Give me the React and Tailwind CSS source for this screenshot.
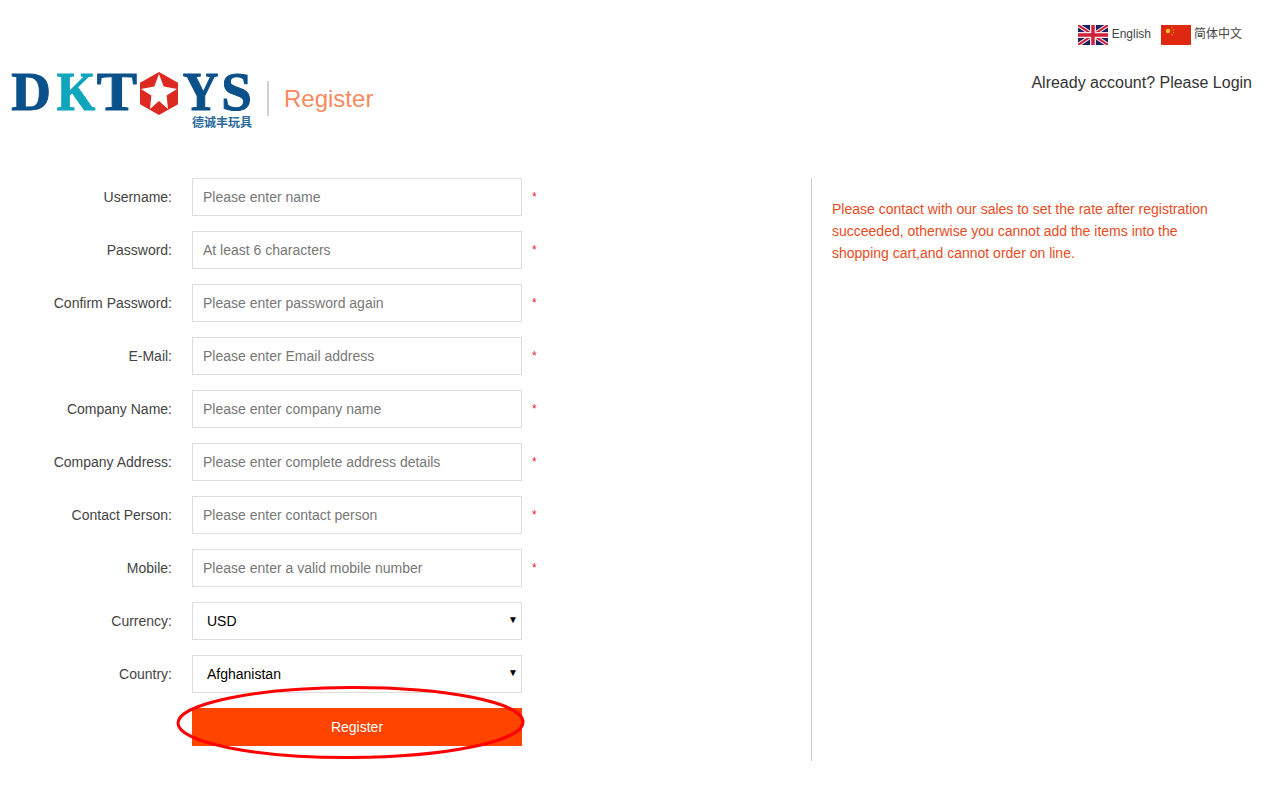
import React from 'react';

const fields = [
  { label: 'Username:', placeholder: 'Please enter name' },
  { label: 'Password:', placeholder: 'At least 6 characters' },
  { label: 'Confirm Password:', placeholder: 'Please enter password again' },
  { label: 'E-Mail:', placeholder: 'Please enter Email address' },
  { label: 'Company Name:', placeholder: 'Please enter company name' },
  { label: 'Company Address:', placeholder: 'Please enter complete address details' },
  { label: 'Contact Person:', placeholder: 'Please enter contact person' },
  { label: 'Mobile:', placeholder: 'Please enter a valid mobile number' },
];

const UkFlag = () => (
  <svg className="shrink-0" width="30" height="20" viewBox="0 0 30 20">
    <rect width="30" height="20" fill="#1a2060" />
    <path d="M0 0L30 20M30 0L0 20" stroke="#f3e6ea" strokeWidth="4" />
    <path d="M0 0L30 20M30 0L0 20" stroke="#d0213a" strokeWidth="2" />
    <path d="M15 0V20M0 10H30" stroke="#f3e6ea" strokeWidth="6" />
    <path d="M15 0V20M0 10H30" stroke="#d0213a" strokeWidth="3.4" />
  </svg>
);

const CnFlag = () => (
  <svg className="shrink-0" width="30" height="20" viewBox="0 0 30 20">
    <rect width="30" height="20" fill="#de2910" />
    <circle cx="7" cy="6" r="2.2" fill="#f7c61a" />
    <circle cx="11" cy="2.5" r="0.7" fill="#f0a020" />
    <circle cx="12.5" cy="5" r="0.7" fill="#f0a020" />
    <circle cx="12.5" cy="7.5" r="0.7" fill="#f0a020" />
    <circle cx="11" cy="10" r="0.7" fill="#f0a020" />
  </svg>
);

const HexStar = () => (
  <svg className="shrink-0" width="38" height="43" viewBox="0 0 38 43">
    <path d="M19 0L38 10.75V32.25L19 43L0 32.25V10.75Z" fill="#dc2a20" />
    <path d="M19 2L23.7 14.5L37 17L26.6 23.5L28 37L19 29L10 37L11.4 23.5L1 17L14.3 14.5Z" fill="#fff" />
  </svg>
);

const Logo = () => (
  <div className="w-[240px]">
    <div className="flex h-[46px] items-center font-['Liberation_Serif',serif] text-[55px] font-bold leading-[40px] text-[#0a5089] [-webkit-text-stroke:1px]">
      <span className="mb-[3px] flex w-[38px] shrink-0 justify-center">D</span>
      <span className="mb-[3px] ml-[7px] flex w-[38px] shrink-0 scale-x-90 justify-center text-[#0fa5bd]">K</span>
      <span className="mb-[3px] ml-[3px] flex w-[38px] shrink-0 scale-x-110 justify-center">T</span>
      <span className="ml-[4px] flex shrink-0"><HexStar /></span>
      <span className="mb-[3px] ml-[5px] flex w-[35px] shrink-0 scale-x-90 justify-center">Y</span>
      <span className="mb-[3px] ml-[5px] flex w-[27px] shrink-0 justify-center">S</span>
    </div>
    <div className="text-right font-['Noto_Sans_CJK_SC',sans-serif] text-[12px] font-bold leading-[12px] text-[#2a6a9a]">
      德诚丰玩具
    </div>
  </div>
);

const SelectRow = ({ label, value }) => (
  <div className="flex items-center">
    <label className="w-[172px] text-right text-[14px] text-[#444]">{label}</label>
    <div className="relative ml-[20px] h-[38px] w-[330px]">
      <select
        defaultValue={value}
        className="h-full w-full appearance-none border border-[#ddd] bg-white pl-[14px] text-[14px] text-black outline-none"
      >
        <option>{value}</option>
      </select>
      <span className="absolute right-[4px] top-[11px] text-[10px] leading-[14px] text-black">▼</span>
    </div>
  </div>
);

export default function App() {
  return (
    <div className="relative h-[800px] w-[1280px] overflow-hidden bg-white font-['Liberation_Sans',Arial,sans-serif]">
      {/* language switch */}
      <div className="flex h-[45px] items-start justify-end pr-[38px] pt-[25px] text-[12px] leading-[18px] text-[#444]">
        <UkFlag />
        <span className="ml-[4px]">English</span>
        <span className="ml-[10px] flex"><CnFlag /></span>
        <span className="ml-[3px] font-['Liberation_Sans','Noto_Sans_CJK_SC',sans-serif]">简体中文</span>
      </div>

      {/* header */}
      <div className="mt-[25px] flex items-start justify-between pl-[12px] pr-[28px]">
        <div className="flex items-start">
          <Logo />
          <div className="ml-[15px] mt-[11px] h-[35px] w-[2px] bg-[#d0d0d0]" />
          <div className="ml-[15px] mt-[14px] text-[24px] leading-[30px] text-[#f98a5e]">Register</div>
        </div>
        <div className="mt-[3px] text-[16px] leading-[20px] text-[#333]">Already account? Please Login</div>
      </div>

      {/* body */}
      <div className="mt-[50px] flex items-stretch">
        <div className="flex w-[811px] flex-col gap-[15px]">
          {fields.map(f => (
            <div key={f.label} className="flex items-center">
              <label className="w-[172px] text-right text-[14px] text-[#444]">{f.label}</label>
              <input
                placeholder={f.placeholder}
                className="ml-[20px] h-[38px] w-[330px] border border-[#ddd] px-[10px] text-[14px] outline-none placeholder:text-[#777]"
              />
              <span className="ml-[10px] text-[12px] text-[#e8212f]">*</span>
            </div>
          ))}
          <SelectRow label="Currency:" value="USD" />
          <SelectRow label="Country:" value="Afghanistan" />
          <div className="pl-[192px]">
            <button className="h-[38px] w-[330px] bg-[#ff4400] text-[14px] text-[#fff]">Register</button>
          </div>
        </div>
        <div className="h-[583px] w-[400px] border-l border-[#ccc] pl-[20px] pt-[20px] text-[14px] leading-[22px] text-[#e84c1e]">
          Please contact with our sales to set the rate after registration succeeded, otherwise you cannot add the items into the shopping cart,and cannot order on line.
        </div>
      </div>

      {/* hand drawn annotation over the button */}
      <svg className="pointer-events-none absolute left-[170px] top-[680px]" width="362" height="86" viewBox="0 0 362 86">
        <ellipse cx="180.5" cy="42.5" rx="172.5" ry="35" fill="none" stroke="#ff0000" strokeWidth="3" transform="rotate(-0.2 180.5 42.5)" />
      </svg>
    </div>
  );
}
